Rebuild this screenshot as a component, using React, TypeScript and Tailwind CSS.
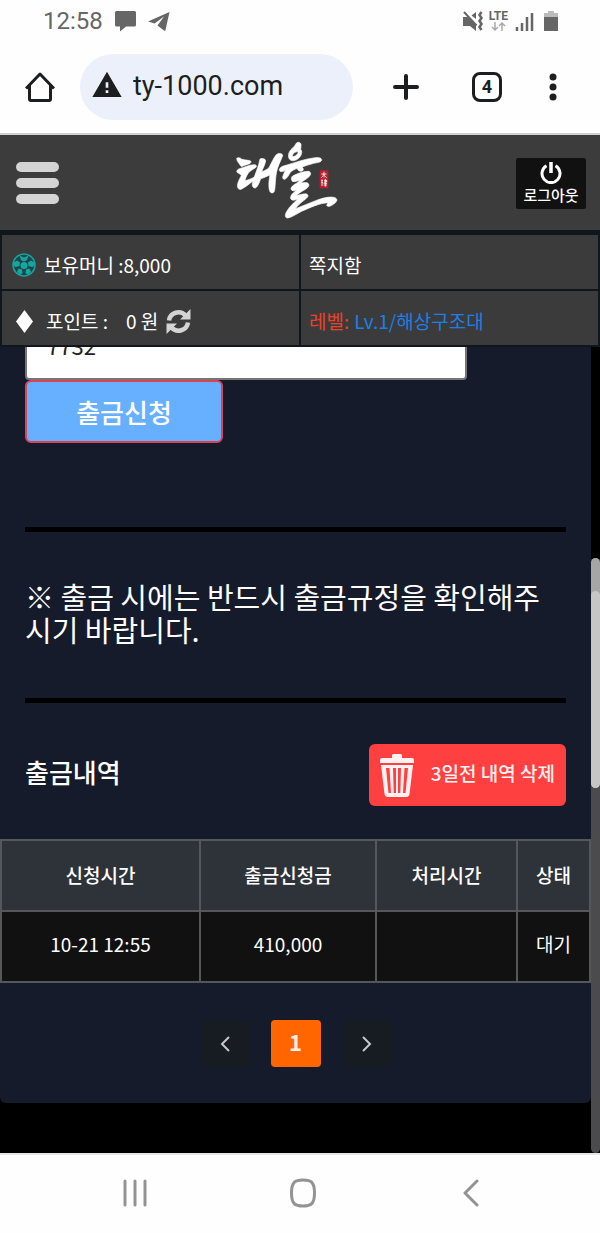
import { useState } from "react";
import { MdWarning } from "react-icons/md";

const headers = ["신청시간", "출금신청금", "처리시간", "상태"];
const rows = [["10-21 12:55", "410,000", "", "대기"]];

function StatusBar() {
  return (
    <div className="flex h-[42px] items-center justify-between pl-[43px] pr-[38px] text-[#666]">
      <div className="flex items-center gap-3">
        <span className="font-[Roboto] text-2xl leading-6">12:58</span>
        <svg width="21" height="21" viewBox="0 0 21 21" fill="currentColor">
          <path d="M1.500 0h18A1.500 1.500 0 0 1 21 1.500V14a1.500 1.500 0 0 1-1.500 1.500H11L5 20.500v-5H1.500A1.500 1.500 0 0 1 0 14V1.500A1.500 1.500 0 0 1 1.500 0z" />
        </svg>
        <svg width="22" height="19" viewBox="0 0 22 19" fill="currentColor">
          <path d="M21.500 0 0 9.500 6.500 11.500 16 4.500 9.500 13.500 16 18.500c.600.500 1.300.200 1.500-.5z" />
        </svg>
      </div>
      <div className="flex items-center gap-[6px]">
        <svg width="20" height="20" viewBox="0 0 20 20" fill="currentColor">
          <path d="M0 6h4.500l8.500 8v6l-6-5H0z" />
          <path d="M8.500 4.500 13 1v7z" />
          <path d="M1 1l12.500 13.500" stroke="currentColor" strokeWidth="2" />
          <path
            d="M18.500 1l-2 3 2 3-2 3 2 3-2 3 2 3"
            fill="none"
            stroke="currentColor"
            strokeWidth="2.500"
          />
        </svg>
        <div className="flex flex-col items-center">
          <span className="font-[Roboto] text-xs font-bold leading-[11px]">
            LTE
          </span>
          <svg
            width="15"
            height="9"
            viewBox="0 0 15 9"
            fill="none"
            stroke="#aaa"
            strokeWidth="1.500"
          >
            <path d="M4 0v8M1 5l3 3 3-3M11 9V1M8 4l3-3 3 3" />
          </svg>
        </div>
        <svg
          width="20"
          height="20"
          viewBox="0 0 20 20"
          fill="none"
          stroke="currentColor"
          strokeWidth="2.500"
        >
          <path d="M3 20v-4M8 20v-8M13 20V6M18 20V2" />
        </svg>
        <svg width="22" height="20" viewBox="0 0 22 20">
          <path d="M4 2h4V0h6v2h4v4H4z" fill="#bbb" />
          <path d="M4 6h14v14H4z" fill="currentColor" />
        </svg>
      </div>
    </div>
  );
}

function BrowserBar() {
  return (
    <div className="flex h-[93px] items-center border-b-2 border-[#cfcfcf] pb-[2px] pl-[25px] pr-[43px] text-[#1d1e20]">
      <button type="button" aria-label="홈">
        <svg
          width="30"
          height="30"
          viewBox="0 0 30 30"
          fill="none"
          stroke="currentColor"
          strokeWidth="3"
          strokeLinejoin="round"
        >
          <path d="M1 16.500 15 2l14 14.500M4.500 13.500V27a1.500 1.500 0 0 0 1.500 1.500h18a1.500 1.500 0 0 0 1.500-1.500V13.500" />
        </svg>
      </button>
      <label className="ml-[25px] flex h-[66px] flex-1 items-center gap-2 rounded-full bg-[#ecf0fa] pl-[9px]">
        <MdWarning className="size-9 shrink-0 pb-1" aria-hidden />
        <input
          type="text"
          aria-label="주소"
          defaultValue="ty-1000.com"
          className="w-full min-w-0 bg-transparent font-[Roboto] text-[27px] outline-none"
        />
      </label>
      <button type="button" aria-label="새 탭" className="ml-10">
        <svg
          width="26"
          height="26"
          viewBox="0 0 26 26"
          stroke="currentColor"
          strokeWidth="4"
          strokeLinecap="round"
        >
          <path d="M13 2v22M2 13h22" />
        </svg>
      </button>
      <button
        type="button"
        className="ml-[53px] flex size-[30px] items-center justify-center rounded-lg border-3 border-current font-[Roboto] text-lg font-bold"
      >
        4
      </button>
      <button type="button" aria-label="메뉴" className="ml-[47px]">
        <svg width="8" height="28" viewBox="0 0 8 28" fill="currentColor">
          <circle cx="4" cy="4" r="3.500" />
          <circle cx="4" cy="14" r="3.500" />
          <circle cx="4" cy="24" r="3.500" />
        </svg>
      </button>
    </div>
  );
}

function Logo() {
  return (
    <svg width="132" height="96" viewBox="45 0 396 288" aria-label="태율">
      <g fill="#fff" stroke="#fff" strokeWidth="2">
        <path d="M50 70c6-5 12 0 16 3 10 3 20 2 26 5 3 6-3 9-12 11-8 2-13 6-17 5-4-7-13-15-13-24z" />
        <path d="M54 114c-6-3-4-9 2-12 16-5 30-12 46-13 8 0 10 6 3 10-8 5-16 10-20 15-6 9-9 17-10 23 10-2 20-7 32-12 4 0 4 4 0 7-16 12-32 26-44 31-10 2-13-8-9-20 3-9 7-16 10-21-3-5-6-6-10-8z" />
        <path d="M120 72c7-3 16-1 17 5-2 13-9 24-12 34 8-4 17-8 22-13 8-15 13-28 21-38 6-7 20-6 20 2-7 18-16 34-19 52-3 18-3 38-5 51-1 10-10 11-14 5-5-10-4-32 0-50-9 4-19 9-28 11-4 12-9 25-16 28-10 0-11-10-7-22 7-22 17-42 21-65z" />
        <path
          fillRule="evenodd"
          d="M228 26c4-6 13-5 15 2 1 6-1 10-1 15 5 5 4 14-1 21-7 11-23 17-31 10-8-8-5-24 6-33 5-5 9-9 12-15zm-11 38c8 2 16-5 18-13-8-3-18 5-18 13z"
        />
        <path d="M178 104c2-9 12-11 23-14 27-8 55-19 85-22 10-1 19 1 19 7-1 7-14 8-24 10-13 4-24 7-35 11 4 4 6 8 1 12-9 3-14-2-15-8-8 3-16 7-21 12-5 10-10 18-17 21-7 0-7-7-4-13l6-14c-8 5-18 6-18-2z" />
        <path d="M218 123c14-8 35-15 48-14 9 3 7 12-1 18-8 7-17 11-22 17 9-1 20-3 23 3 3 8-7 15-17 20-8 5-16 10-20 15 10-2 22-7 31-5 9 5 1 12-8 19-12 9-22 18-25 25 20-7 40-17 60-24 18-7 43-14 58-9 11 5 4 14-5 20-8 6-17 9-20 3 0-3 4-5 4-8-28 2-54 15-79 26-14 7-31 19-42 20-11-1-7-13-2-21 8-14 20-24 32-35-8 3-18 4-21-2-2-10 9-19 18-25-7 2-15 3-17-4 0-8 11-14 19-19l10-9c-8 3-18 8-25 5-4-6-4-12 1-16z" />
      </g>
      {/* red seal */}
      <rect x="299" y="106" width="26" height="54" rx="3" fill="#bb1e2c" />
      <path
        d="M304 117h16M312 110c0 8-2 13-8 18M312 117c1 5 4 9 8 11M312 124v3M304 137h5M306 133v20M304 143h5M312 136h8v5h-8M311 145h10M311 150h10M316 132v23"
        fill="none"
        stroke="#fff"
        strokeWidth="2.500"
      />
    </svg>
  );
}

function Header() {
  return (
    <header className="grid h-[95px] grid-cols-[1fr_auto_1fr] items-center bg-[#3c3c3c] pb-[2px] pl-4 pr-[14px]">
      <button
        type="button"
        aria-label="메뉴 열기"
        className="flex w-[43px] flex-col gap-[6px]"
      >
        <span className="h-[10px] rounded-full bg-[#d4d4d4]" />
        <span className="h-[10px] rounded-full bg-[#d4d4d4]" />
        <span className="h-[10px] rounded-full bg-[#d4d4d4]" />
      </button>
      <Logo />
      <button
        type="button"
        className="flex h-[51px] w-[70px] flex-col items-center justify-center gap-px justify-self-end rounded-xs bg-[#111] text-[15px] font-medium leading-5"
      >
        <svg
          width="22"
          height="22"
          viewBox="0 0 22 22"
          fill="none"
          stroke="currentColor"
          strokeWidth="3"
        >
          <path d="M6.500 3.800a9 9 0 1 0 9 0" />
          <path d="M11 0v11" strokeWidth="3.500" />
        </svg>
        로그아웃
      </button>
    </header>
  );
}

function BallIcon() {
  return (
    <svg width="24" height="24" viewBox="0 0 24 24" fill="#16a6a0">
      <circle
        cx="12"
        cy="12"
        r="11"
        fill="#1f4548"
        stroke="#16a6a0"
        strokeWidth="1.500"
      />
      <circle cx="12" cy="12.500" r="3.500" />
      <path d="M7.500 2.500 12 4.500l4.500-2-1.500 4.500-3 1.500L9 7zM1.500 9.500 5 7.500l3 2-.500 3.500L3.500 14 1.500 12.500zM22.500 9.500 19 7.500l-3 2 .500 3.500 4 1 2-1.500zM5 19l1.500-3.500 3.500 1 .500 3.500-2 2zM19 19l-1.500-3.500-3.500 1-.500 3.500 2 2z" />
    </svg>
  );
}

function RefreshIcon() {
  return (
    <svg width="25" height="25" viewBox="0 0 25 25" fill="none">
      <path
        d="M3 11.500A9.500 9.500 0 0 1 19.500 6.500M22 13.500A9.500 9.500 0 0 1 5.500 18.500"
        stroke="#d4d4d4"
        strokeWidth="4.500"
      />
      <path d="M24.500 0v10.500H14zM.500 25V14.500H11z" fill="#d4d4d4" />
    </svg>
  );
}

function AccountInfo() {
  return (
    <div className="grid grid-cols-2 gap-[2px] bg-[#10171c] px-[2px] pb-[2px] pt-[5px] *:flex *:h-[54px] *:items-center *:bg-[#3b3b3b] *:pt-[6px]">
      <div className="pl-[10px]">
        <BallIcon />
        <span className="ml-2">보유머니 :8,000</span>
      </div>
      <div className="pl-2">
        <a href="#messages">쪽지함</a>
      </div>
      <div className="pl-[14px]">
        <svg width="17" height="23" viewBox="0 0 17 23" fill="#fff">
          <path d="M8.500 0 17 11.500 8.500 23 0 11.500z" />
        </svg>
        <span className="ml-[13px]">포인트 :</span>
        <span className="ml-[18px]">0 원</span>
        <button type="button" aria-label="새로고침" className="ml-2">
          <RefreshIcon />
        </button>
      </div>
      <div className="gap-[5px] pl-2">
        <span className="text-[#e8432a]">레벨:</span>
        <span className="text-[#1d7fe6]">Lv.1/해상구조대</span>
      </div>
    </div>
  );
}

function TrashIcon() {
  return (
    <svg width="34" height="43" viewBox="0 0 34 43" fill="#fff1f1">
      <path d="M12 4V1.500Q12 0 13.500 0h7Q22 0 22 1.500V4h10q2 0 2 2v3H0V6q0-2 2-2z" />
      <path
        fillRule="evenodd"
        d="M1 11h32l-3.500 29q-.4 3-3.500 3H8q-3 0-3.500-3zM6 14l2.500 25H11L9.500 14zM13 14l.7 25H16V14zM18 14v25h2.300l.7-25zM24.500 14 23 39h2.500L28 14z"
      />
    </svg>
  );
}

function HistoryTable() {
  return (
    <table className="w-full table-fixed border-collapse border-2 border-[#55585b] text-center">
      <colgroup>
        <col className="w-[199px]" />
        <col className="w-[176px]" />
        <col className="w-[141px]" />
        <col />
      </colgroup>
      <thead className="bg-[#2e333a]">
        <tr>
          {headers.map((name) => (
            <th
              key={name}
              className="h-[71px] border-2 border-[#55585b] font-medium"
            >
              {name}
            </th>
          ))}
        </tr>
      </thead>
      <tbody className="bg-[#111]">
        {rows.map((row) => (
          <tr key={row[0]}>
            {row.map((value, i) => (
              <td key={i} className="h-[71px] border-2 border-[#55585b] pb-1">
                {value}
              </td>
            ))}
          </tr>
        ))}
      </tbody>
    </table>
  );
}

function Pagination() {
  return (
    <nav className="mt-[37px] flex h-[47px] justify-center gap-[22px]">
      <button
        type="button"
        aria-label="이전"
        className="flex w-12 items-center justify-center rounded-sm bg-[#171c23]"
      >
        <svg width="10" height="16" viewBox="0 0 10 16" fill="none" stroke="#c4c6ca" strokeWidth="2">
          <path d="M9 1 2 8l7 7" />
        </svg>
      </button>
      <button
        type="button"
        className="w-[50px] rounded-sm bg-[#ff6600] pb-1 text-[22px] font-bold text-[#fff0e0]"
      >
        1
      </button>
      <button
        type="button"
        aria-label="다음"
        className="flex w-12 items-center justify-center rounded-sm bg-[#171c23]"
      >
        <svg width="10" height="16" viewBox="0 0 10 16" fill="none" stroke="#c4c6ca" strokeWidth="2">
          <path d="M1 1l7 7-7 7" />
        </svg>
      </button>
    </nav>
  );
}

function Withdrawal() {
  const [password, setPassword] = useState("7732");

  return (
    <main className="min-w-0 flex-1 rounded-b-md bg-[#161b2b] pb-9">
      <div className="px-[25px]">
        {/* the field is scrolled halfway under the header */}
        <div className="flex h-[33px] items-end overflow-hidden">
          <input
            type="text"
            aria-label="출금 비밀번호"
            value={password}
            onChange={(e) => setPassword(e.target.value)}
            className="h-[70px] w-[442px] max-w-full shrink-0 rounded-sm border-2 border-[#767676] bg-white px-5 text-[22px] text-[#222]"
          />
        </div>
        <button
          type="button"
          className="block h-[63px] w-[198px] rounded-md border-2 border-[#dc4257] bg-[#66b0ff] text-[26px] font-medium"
        >
          출금신청
        </button>
        <hr className="mt-[84px] border-t-5 border-black" />
        <p className="mb-[52px] mt-12 break-all text-[29px] leading-[33px]">
          ※ 출금 시에는 반드시 출금규정을 확인해주시기 바랍니다.
        </p>
        <hr className="border-t-5 border-black" />
        <div className="mb-[33px] mt-[41px] flex items-center justify-between">
          <h2 className="pb-2 text-[26px] font-medium">출금내역</h2>
          <button
            type="button"
            className="flex h-[62px] items-center gap-[17px] rounded-md bg-[#ff4040] px-[11px] text-[19px] font-medium text-[#fff1f1]"
          >
            <TrashIcon />
            <span className="pb-1">3일전 내역 삭제</span>
          </button>
        </div>
      </div>
      <HistoryTable />
      <Pagination />
    </main>
  );
}

function NavBar() {
  return (
    <nav className="grid h-20 grid-cols-3 items-center justify-items-center border-t-2 border-[#e6e6e6] pb-[2px] pl-[51px] pr-[45px] text-[#929492]">
      <button type="button" aria-label="최근 앱">
        <svg width="24" height="28" viewBox="0 0 24 28" stroke="currentColor" strokeWidth="3" strokeLinecap="round">
          <path d="M2 2v24M12 2v24M22 2v24" />
        </svg>
      </button>
      <button type="button" aria-label="홈 화면">
        <svg width="28" height="30" viewBox="0 0 28 30" fill="none" stroke="currentColor" strokeWidth="3">
          <path d="M14 2C22 2 25.500 4 25.500 15S22 28 14 28 2.500 26 2.500 15 6 2 14 2z" />
        </svg>
      </button>
      <button type="button" aria-label="뒤로">
        <svg
          width="16"
          height="28"
          viewBox="0 0 16 28"
          fill="none"
          stroke="currentColor"
          strokeWidth="3"
          strokeLinecap="round"
          strokeLinejoin="round"
        >
          <path d="M14 2 2 14l12 12" />
        </svg>
      </button>
    </nav>
  );
}

export default function App() {
  return (
    <div className="bg-[#fefefe] font-['Noto_Sans_CJK_KR',sans-serif] text-[19px] text-white">
      <StatusBar />
      <BrowserBar />
      <Header />
      <AccountInfo />
      <div className="flex bg-black">
        <div className="min-w-0 flex-1 pb-[50px]">
          <Withdrawal />
        </div>
        <div className="flex w-[9px] flex-col pt-[211px]">
          <div className="flex-1 rounded-full bg-[#4b4b4d]">
            <div className="h-[230px] rounded-full bg-[#a6a6a6] pt-[33px]">
              <div className="h-full rounded-full bg-[#c6c6c6]" />
            </div>
          </div>
        </div>
      </div>
      <NavBar />
    </div>
  );
}
